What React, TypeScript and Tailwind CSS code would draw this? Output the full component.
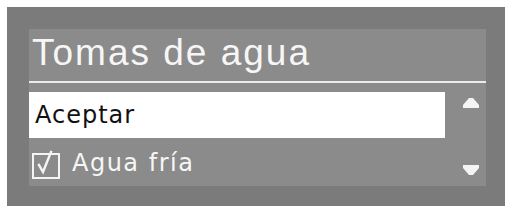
import React from "react";

function CheckBox() {
  return (
    <svg width="30" height="30" viewBox="0 0 30 30" className="overflow-visible">
      <rect x="1" y="4" width="26" height="24" fill="none" stroke="#f4f4f4" strokeWidth="2" />
      <polyline
        points="7,15 11,22 19,2"
        fill="none"
        stroke="#f4f4f4"
        strokeWidth="2.5"
        strokeLinecap="square"
        strokeLinejoin="miter"
      />
    </svg>
  );
}

function ArrowUp() {
  return (
    <svg width="16" height="10" viewBox="0 0 16 10">
      <polygon points="6,0 10,0 16,7 16,10 0,10 0,7" fill="#f4f4f4" />
    </svg>
  );
}

function ArrowDown() {
  return (
    <svg width="16" height="10" viewBox="0 0 16 10">
      <polygon points="0,0 16,0 16,3 10,10 6,10 0,3" fill="#f4f4f4" />
    </svg>
  );
}

export default function App() {
  return (
    <div className="w-[510px] h-[207px] bg-white pt-[7px] pl-[7px]">
      <div className="w-[498px] h-[199px] bg-[#7b7b7b] pt-[22px] pl-[22px]">
        <div className="w-[457px] h-[157px] bg-[#8b8b8b] flex flex-col">
          {/* Title */}
          <div className="h-[54px] border-b-2 border-[#ececec] pt-[5px] pl-[3px]">
            <h1
              className="text-[37px] leading-[37px] tracking-[2px] text-[#f6f6f6]"
              style={{ fontFamily: '"Liberation Sans", Arial, sans-serif' }}
            >
              Tomas de agua
            </h1>
          </div>

          {/* List */}
          <div className="mt-[9px] flex flex-1">
            <div className="flex flex-col w-[416px]">
              <div className="h-[46px] bg-white flex items-center pl-[6px]">
                <span
                  className="text-[24px] leading-[24px] tracking-[1px] text-[#111]"
                  style={{ fontFamily: '"DejaVu Sans", sans-serif' }}
                >
                  Aceptar
                </span>
              </div>
              <div className="flex items-start">
                <div className="ml-[3px] mt-[12px]">
                  <CheckBox />
                </div>
                <span
                  className="ml-[10px] mt-[13px] text-[24px] leading-[24px] tracking-[1.5px] text-[#f6f6f6]"
                  style={{ fontFamily: '"DejaVu Sans", sans-serif' }}
                >
                  Agua fría
                </span>
              </div>
            </div>

            {/* Scroll arrows */}
            <div className="flex-1 flex flex-col justify-between pt-[6px] pb-[11px] pl-[18px]">
              <ArrowUp />
              <ArrowDown />
            </div>
          </div>
        </div>
      </div>
    </div>
  );
}
